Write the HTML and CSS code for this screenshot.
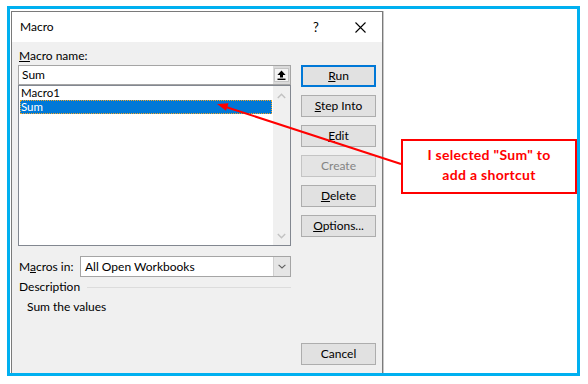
FILE: index.html
```html
<!DOCTYPE html>
<html lang="en">
<head>
    <meta charset="UTF-8">
    <title>Macro</title>
    <link rel="stylesheet" href="styles.css">
</head>
<body>
    <div class="shot">
        <div class="dialog">
            <div class="titlebar">
                <span class="title">Macro</span>
                <span class="help">?</span>
                <span class="close">
                    <svg width="11" height="11" viewBox="0 0 11 11"><path d="M0.5 0.5 L10.5 10.5 M10.5 0.5 L0.5 10.5" stroke="#000" stroke-width="1.1" fill="none"/></svg>
                </span>
            </div>

            <div class="dialog-body">
                <div class="left-col">
                    <div class="field-label"><u>M</u>acro name:</div>
                    <div class="name-box">
                        <span class="name-value">Sum</span>
                        <span class="name-btn">
                            <span class="name-btn-face">
                                <svg width="9" height="10" viewBox="0 0 9 10"><path d="M4.5 0.5 L8.6 5 L6 5 L6 7.6 L3 7.6 L3 5 L0.4 5 Z" fill="#000"/><rect x="0.5" y="8.6" width="8" height="1.4" fill="#000"/></svg>
                            </span>
                        </span>
                    </div>

                    <div class="macro-list">
                        <div class="list-items">
                            <div class="list-item">Macro1</div>
                            <div class="list-item selected">Sum</div>
                        </div>
                        <div class="scrollbar">
                            <svg width="9" height="6" viewBox="0 0 9 6"><path d="M0.8 5 L4.5 1.3 L8.2 5" stroke="#c2c2c2" stroke-width="1.4" fill="none"/></svg>
                            <svg width="9" height="6" viewBox="0 0 9 6"><path d="M0.8 1 L4.5 4.7 L8.2 1" stroke="#c2c2c2" stroke-width="1.4" fill="none"/></svg>
                        </div>
                    </div>

                    <div class="macros-in">
                        <span class="macros-in-label">M<u>a</u>cros in:</span>
                        <div class="select">
                            <span class="select-value">All Open Workbooks</span>
                            <span class="select-btn">
                                <svg width="8" height="5" viewBox="0 0 8 5"><path d="M0.6 0.8 L4 4 L7.4 0.8" stroke="#606060" stroke-width="1.1" fill="none"/></svg>
                            </span>
                        </div>
                    </div>

                    <div class="desc-head">
                        <span>Description</span>
                        <span class="desc-rule"></span>
                    </div>
                    <div class="desc-text">Sum the values</div>
                </div>

                <div class="right-col">
                    <div class="btn default"><u>R</u>un</div>
                    <div class="btn"><u>S</u>tep Into</div>
                    <div class="btn"><u>E</u>dit</div>
                    <div class="btn disabled">Create</div>
                    <div class="btn"><u>D</u>elete</div>
                    <div class="btn"><u>O</u>ptions...</div>
                    <div class="btn cancel">Cancel</div>
                </div>
            </div>
        </div>

        <div class="callout">I selected "Sum" to<br>add a shortcut</div>

        <svg class="arrow" width="588" height="384" viewBox="0 0 588 384">
            <line x1="401" y1="164" x2="226" y2="107" stroke="#ff0000" stroke-width="2"/>
            <polygon points="217,104 228.5,103.2 226,110.8" fill="#ff0000"/>
        </svg>
    </div>
</body>
</html>
```

FILE: styles.css
```css
body {
    margin: 0;
    background-color: #ffffff;
    font-family: Lato, "Liberation Sans", sans-serif;
    font-size: 12px;
    color: #000000;
}
u {
    text-underline-offset: 1px;
}

/* blue screenshot frame */
.shot {
    position: relative;
    box-sizing: border-box;
    width: 573px;
    height: 370px;
    margin: 6px 0 0 7px;
    padding: 2px 0 0 1px;
    border: 3px solid #00b0f0;
    display: flex;
    align-items: flex-start;
    overflow: hidden;
}

.dialog {
    box-sizing: border-box;
    width: 372px;
    height: 362px;
    border: 1px solid #7a7a7a;
    border-bottom: none;
    box-shadow: 1px 0 0 #c8c8c8;
    background-color: #f0f0f0;
    display: flex;
    flex-direction: column;
}
.titlebar {
    height: 30px;
    background-color: #ffffff;
    display: flex;
    align-items: center;
    padding-left: 8px;
}
.title {
    flex: 1;
    line-height: 30px;
}
.help {
    width: 44px;
    text-align: center;
    font-size: 13px;
}
.close {
    width: 44px;
    display: flex;
    justify-content: center;
    align-items: center;
}

.dialog-body {
    flex: 1;
    display: flex;
    gap: 10px;
    padding: 6px 6px 8px 6px;
}
.left-col {
    width: 273px;
    display: flex;
    flex-direction: column;
}
.field-label {
    line-height: 16px;
    margin: 0 0 1px 1px;
}

.name-box {
    box-sizing: border-box;
    height: 20px;
    border: 1px solid #a5a5a5;
    background-color: #ffffff;
    display: flex;
}
.name-value {
    flex: 1;
    padding-left: 3px;
    line-height: 18px;
}
.name-btn {
    width: 17px;
    background-color: #dadada;
    display: flex;
    align-items: center;
    justify-content: center;
}
.name-btn-face {
    box-sizing: border-box;
    width: 15px;
    height: 14px;
    border: 1px solid #c4c4c4;
    background-color: #f4f4f4;
    display: flex;
    align-items: center;
    justify-content: center;
}

.macro-list {
    box-sizing: border-box;
    height: 161px;
    border: 1px solid #828790;
    background-color: #ffffff;
    display: flex;
}
.list-items {
    flex: 1;
    padding: 0 1px;
}
.list-item {
    height: 14px;
    line-height: 14px;
    font-size: 11.5px;
    padding-left: 1px;
}
.list-item.selected {
    background-color: #0078d7;
    color: #ffffff;
    outline: 1px dotted #f5a623;
    outline-offset: -1px;
}
.scrollbar {
    width: 17px;
    background-color: #f0f0f0;
    display: flex;
    flex-direction: column;
    justify-content: space-between;
    align-items: center;
    padding: 7px 0 6px;
}

.macros-in {
    margin-top: 10px;
    display: flex;
    align-items: center;
}
.macros-in-label {
    width: 61px;
    padding-left: 1px;
}
.select {
    flex: 1;
    box-sizing: border-box;
    height: 21px;
    border: 1px solid #a5a5a5;
    background-color: #ffffff;
    display: flex;
}
.select-value {
    flex: 1;
    padding-left: 4px;
    line-height: 19px;
}
.select-btn {
    width: 16px;
    background-color: #e5e5e5;
    border-left: 1px solid #d0d0d0;
    display: flex;
    align-items: center;
    justify-content: center;
}

.desc-head {
    margin-top: 2px;
    line-height: 16px;
    display: flex;
    align-items: center;
    gap: 7px;
    padding-left: 1px;
}
.desc-rule {
    flex: 1;
    height: 1px;
    background-color: #dcdcdc;
}
.desc-text {
    margin-top: 4px;
    padding-left: 9px;
    line-height: 16px;
}

/* command buttons */
.right-col {
    width: 75px;
    display: flex;
    flex-direction: column;
    gap: 8px;
    padding-top: 17px;
}
.btn {
    box-sizing: border-box;
    height: 22px;
    border: 1px solid #adadad;
    background-color: #e1e1e1;
    text-align: center;
    line-height: 20px;
}
.btn.default {
    border: 2px solid #0078d7;
    line-height: 18px;
}
.btn.disabled {
    color: #838383;
    border-color: #c4c4c4;
    background-color: #e4e4e4;
}
.btn.cancel {
    margin-top: auto;
}

/* annotation */
.callout {
    position: absolute;
    left: 391px;
    top: 130px;
    box-sizing: border-box;
    width: 176px;
    height: 55px;
    border: 2px solid #ff0000;
    background-color: #ffffff;
    color: #ff0000;
    font-weight: bold;
    font-size: 14px;
    letter-spacing: 0.3px;
    line-height: 20px;
    text-align: center;
    padding-top: 4px;
}
.arrow {
    position: absolute;
    left: -10px;
    top: -9px;
    pointer-events: none;
}
```
